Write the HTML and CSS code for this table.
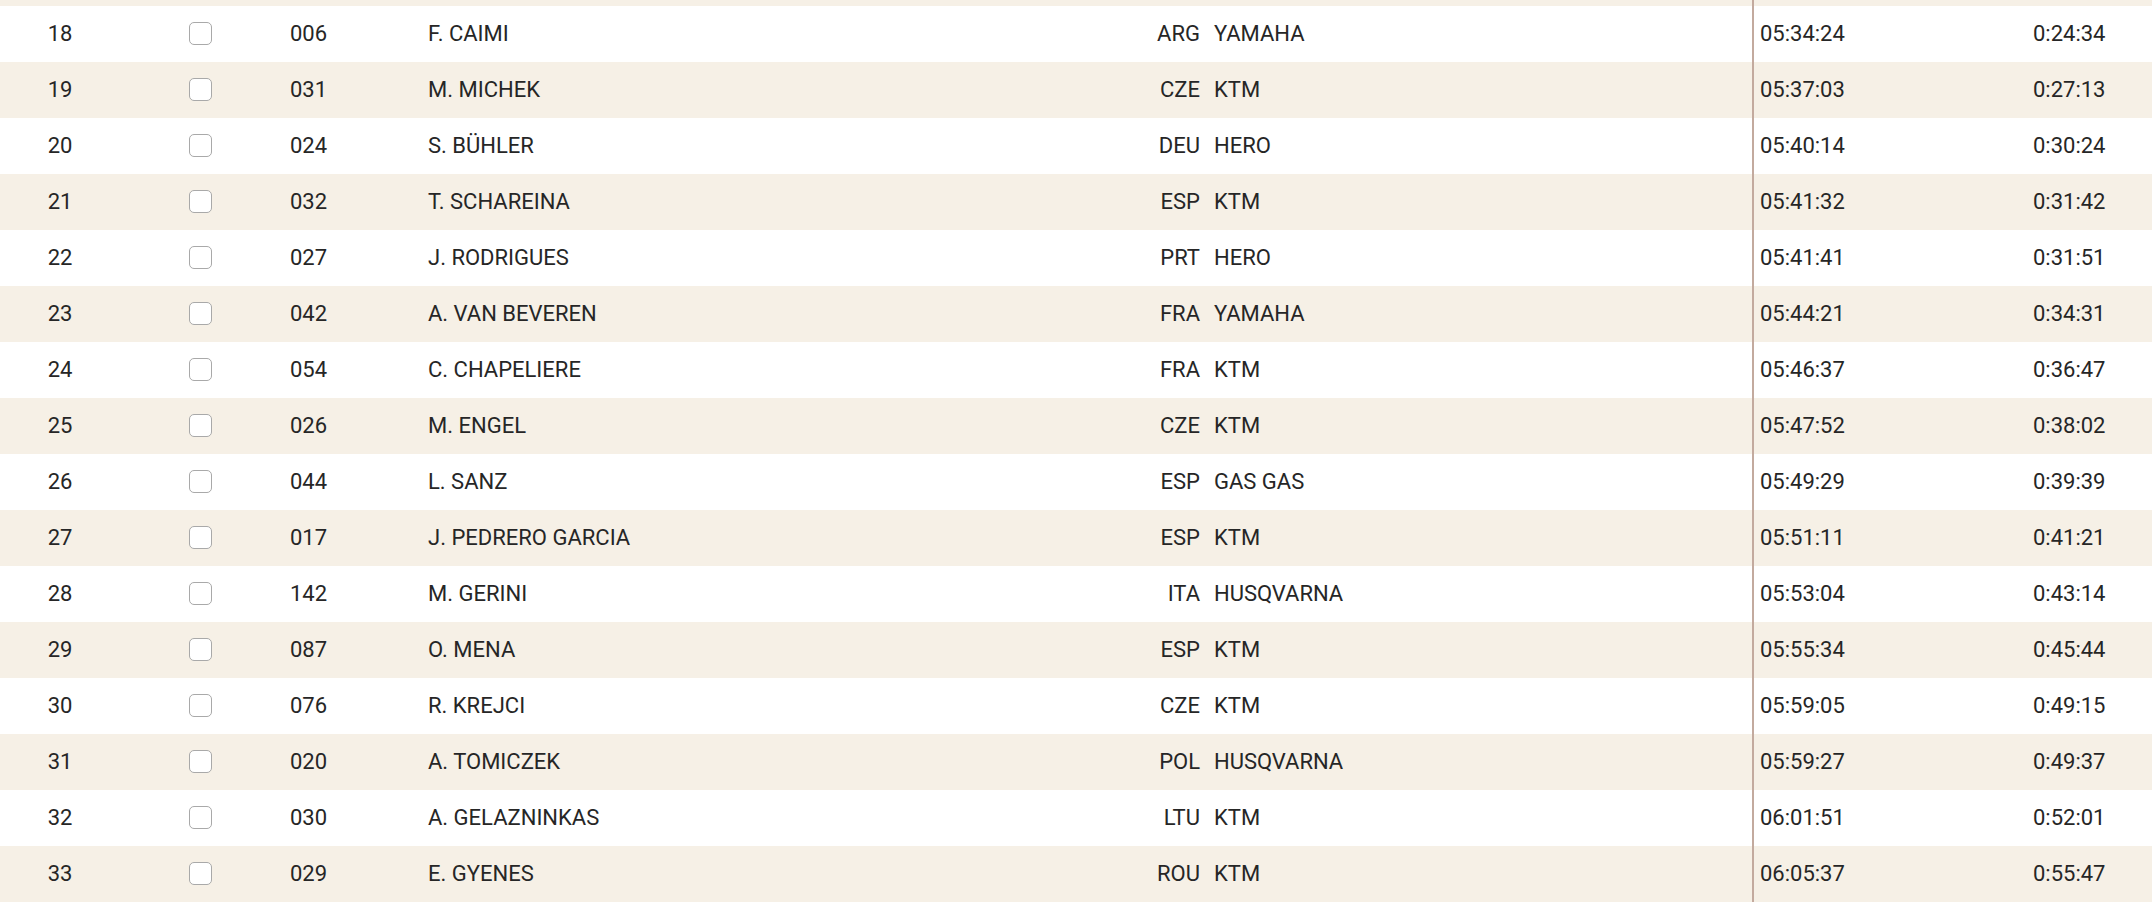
FILE: index.html
```html
<!DOCTYPE html>
<html>
<head>
<meta charset="utf-8">
<link rel="stylesheet" href="styles.css">
</head>
<body>
<div class="table">
  <div class="row alt stub"><div></div><div></div><div></div><div></div><div></div><div></div><div class="time"></div><div></div></div>
  <div class="row"><div class="pos">18</div><div class="chk"><span class="box"></span></div><div class="num">006</div><div class="name">F. CAIMI</div><div class="nat">ARG</div><div class="make">YAMAHA</div><div class="time">05:34:24</div><div class="gap">0:24:34</div></div>
  <div class="row alt"><div class="pos">19</div><div class="chk"><span class="box"></span></div><div class="num">031</div><div class="name">M. MICHEK</div><div class="nat">CZE</div><div class="make">KTM</div><div class="time">05:37:03</div><div class="gap">0:27:13</div></div>
  <div class="row"><div class="pos">20</div><div class="chk"><span class="box"></span></div><div class="num">024</div><div class="name">S. BÜHLER</div><div class="nat">DEU</div><div class="make">HERO</div><div class="time">05:40:14</div><div class="gap">0:30:24</div></div>
  <div class="row alt"><div class="pos">21</div><div class="chk"><span class="box"></span></div><div class="num">032</div><div class="name">T. SCHAREINA</div><div class="nat">ESP</div><div class="make">KTM</div><div class="time">05:41:32</div><div class="gap">0:31:42</div></div>
  <div class="row"><div class="pos">22</div><div class="chk"><span class="box"></span></div><div class="num">027</div><div class="name">J. RODRIGUES</div><div class="nat">PRT</div><div class="make">HERO</div><div class="time">05:41:41</div><div class="gap">0:31:51</div></div>
  <div class="row alt"><div class="pos">23</div><div class="chk"><span class="box"></span></div><div class="num">042</div><div class="name">A. VAN BEVEREN</div><div class="nat">FRA</div><div class="make">YAMAHA</div><div class="time">05:44:21</div><div class="gap">0:34:31</div></div>
  <div class="row"><div class="pos">24</div><div class="chk"><span class="box"></span></div><div class="num">054</div><div class="name">C. CHAPELIERE</div><div class="nat">FRA</div><div class="make">KTM</div><div class="time">05:46:37</div><div class="gap">0:36:47</div></div>
  <div class="row alt"><div class="pos">25</div><div class="chk"><span class="box"></span></div><div class="num">026</div><div class="name">M. ENGEL</div><div class="nat">CZE</div><div class="make">KTM</div><div class="time">05:47:52</div><div class="gap">0:38:02</div></div>
  <div class="row"><div class="pos">26</div><div class="chk"><span class="box"></span></div><div class="num">044</div><div class="name">L. SANZ</div><div class="nat">ESP</div><div class="make">GAS GAS</div><div class="time">05:49:29</div><div class="gap">0:39:39</div></div>
  <div class="row alt"><div class="pos">27</div><div class="chk"><span class="box"></span></div><div class="num">017</div><div class="name">J. PEDRERO GARCIA</div><div class="nat">ESP</div><div class="make">KTM</div><div class="time">05:51:11</div><div class="gap">0:41:21</div></div>
  <div class="row"><div class="pos">28</div><div class="chk"><span class="box"></span></div><div class="num">142</div><div class="name">M. GERINI</div><div class="nat">ITA</div><div class="make">HUSQVARNA</div><div class="time">05:53:04</div><div class="gap">0:43:14</div></div>
  <div class="row alt"><div class="pos">29</div><div class="chk"><span class="box"></span></div><div class="num">087</div><div class="name">O. MENA</div><div class="nat">ESP</div><div class="make">KTM</div><div class="time">05:55:34</div><div class="gap">0:45:44</div></div>
  <div class="row"><div class="pos">30</div><div class="chk"><span class="box"></span></div><div class="num">076</div><div class="name">R. KREJCI</div><div class="nat">CZE</div><div class="make">KTM</div><div class="time">05:59:05</div><div class="gap">0:49:15</div></div>
  <div class="row alt"><div class="pos">31</div><div class="chk"><span class="box"></span></div><div class="num">020</div><div class="name">A. TOMICZEK</div><div class="nat">POL</div><div class="make">HUSQVARNA</div><div class="time">05:59:27</div><div class="gap">0:49:37</div></div>
  <div class="row"><div class="pos">32</div><div class="chk"><span class="box"></span></div><div class="num">030</div><div class="name">A. GELAZNINKAS</div><div class="nat">LTU</div><div class="make">KTM</div><div class="time">06:01:51</div><div class="gap">0:52:01</div></div>
  <div class="row alt"><div class="pos">33</div><div class="chk"><span class="box"></span></div><div class="num">029</div><div class="name">E. GYENES</div><div class="nat">ROU</div><div class="make">KTM</div><div class="time">06:05:37</div><div class="gap">0:55:47</div></div>
</div>
</body>
</html>
```
FILE: styles.css
```css
html, body {
  margin: 0;
  padding: 0;
  background: #ffffff;
}
body {
  font-family: Roboto, "Liberation Sans", sans-serif;
  font-size: 22px;
  color: #262626;
  overflow: hidden;
}
.table {
  width: 2152px;
}
.row {
  display: grid;
  grid-template-columns: 120px 160px 138px 682px 107px 545px 273px 127px;
  height: 56px;
  align-items: stretch;
  background: #ffffff;
}
.row.alt {
  background: #f6f0e6;
}
.row.stub {
  height: 6px;
}
.row > div {
  display: flex;
  align-items: center;
  white-space: nowrap;
  padding-bottom: 1px;
}
.row.stub > div {
  padding-bottom: 0;
}
.pos {
  justify-content: center;
}
.chk {
  justify-content: center;
}
.box {
  width: 21px;
  height: 21px;
  border: 1px solid #a9a9a9;
  border-radius: 5px;
  background: #ffffff;
}
.num {
  padding-left: 10px;
}
.name {
  padding-left: 10px;
}
.nat {
  justify-content: flex-end;
  padding-right: 7px;
}
.make {
  padding-left: 7px;
}
.time {
  border-left: 2px solid #c3aa9e;
  padding-left: 6px;
}
.gap {
  padding-left: 8px;
}
```
